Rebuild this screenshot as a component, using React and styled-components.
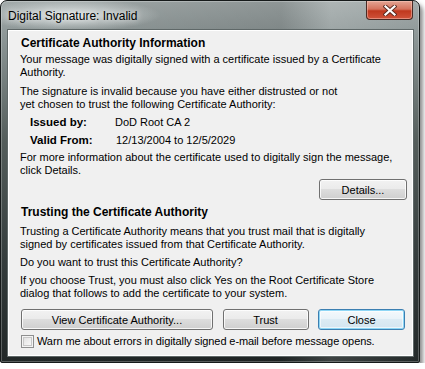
import React, { useState } from 'react';
import styled, { createGlobalStyle } from 'styled-components';

const GlobalStyle = createGlobalStyle`
  html, body {
    margin: 0;
    padding: 0;
    background: #ffffff;
  }
  body {
    font-family: "Liberation Sans", Arial, sans-serif;
  }
`;

const Window = styled.div`
  width: 418px;
  height: 361px;
  border: 1px solid #161a1a;
  border-radius: 7px 7px 2px 2px;
  background:
    radial-gradient(ellipse 90px 16px at 70px 14px, rgba(235, 240, 240, 0.85), rgba(235, 240, 240, 0) 100%),
    linear-gradient(to right, rgba(255,255,255,0) 0, rgba(0,0,0,0.12) 280px, rgba(255,255,255,0.12) 330px, rgba(255,255,255,0) 420px),
    linear-gradient(to bottom, #a3abab 0, #8a9494 40px, #545d5b 140px, #343c3c 260px, #222828 100%);
  box-shadow: 3px 4px 4px rgba(0, 0, 0, 0.45), inset 0 0 0 1px rgba(255, 255, 255, 0.25);
  display: flex;
  flex-direction: column;
`;

const TitleBar = styled.div`
  height: 28px;
  display: flex;
  align-items: flex-start;
  padding: 0 6px 0 7px;
`;

const TitleText = styled.div`
  margin-top: 8px;
  font-size: 12px;
  line-height: 14px;
  color: #000;
  text-shadow: 0 0 6px rgba(255, 255, 255, 0.9);
`;

const CloseButton = styled.div`
  margin-left: auto;
  width: 45px;
  height: 18px;
  border: 1px solid #4a2a24;
  border-top: none;
  border-radius: 0 0 4px 4px;
  background: linear-gradient(to bottom, #e4a594 0, #d5735d 45%, #c0381e 55%, #d0533a 100%);
  box-shadow: inset 0 0 0 1px rgba(255, 210, 200, 0.45);
  display: flex;
  align-items: center;
  justify-content: center;
`;

const Panel = styled.div`
  flex: 1;
  margin: 0 5px 5px 6px;
  border: 1px solid #5f6868;
  box-shadow: inset 0 0 0 1px #ffffff;
  background: #f0f0f0;
  padding: 7px 6px 0 12px;
  display: flex;
  flex-direction: column;
  font-size: 11px;
  line-height: 13px;
  color: #000;
`;

const Heading = styled.div`
  font-weight: bold;
  font-size: 12px;
  padding-left: 1px;
  margin-top: ${p => p.$mt || 0}px;
`;

const Para = styled.div`
  white-space: nowrap;
  margin-top: ${p => p.$mt || 0}px;
`;

const InfoGrid = styled.div`
  margin-top: 5px;
  padding-left: 10px;
  display: grid;
  grid-template-columns: 85px auto;
  row-gap: 5px;
`;

const InfoLabel = styled.div`
  font-weight: bold;
  font-size: 11.5px;
`;

const InfoValue = styled.div`
  padding-left: ${p => p.$pl || 0}px;
`;

const DetailsRow = styled.div`
  margin-top: 2px;
  display: flex;
  justify-content: flex-end;
`;

const Button = styled.button`
  width: ${p => p.$w}px;
  height: 21px;
  padding: 0;
  font-family: inherit;
  font-size: 11px;
  color: #000;
  border: 1px solid ${p => (p.$default ? '#3c7fb1' : '#707070')};
  border-radius: 3px;
  background: ${p => (p.$default
    ? 'linear-gradient(to bottom, #f4f9fc 0, #eaf3f9 45%, #dcebf4 50%, #d3e5f0 100%)'
    : 'linear-gradient(to bottom, #f2f2f2 0, #ebebeb 45%, #dddddd 50%, #cfcfcf 100%)')};
  box-shadow: ${p => (p.$default
    ? 'inset 0 0 0 1px #8ed6f5, inset 0 0 0 2px rgba(255,255,255,0.6)'
    : 'inset 0 0 0 1px rgba(255,255,255,0.8)')};
`;

const ButtonRow = styled.div`
  margin-top: 9px;
  margin-left: 1px;
  width: 384px;
  display: flex;
  justify-content: space-between;
`;

const CheckRow = styled.label`
  margin-top: 5px;
  margin-left: 1px;
  display: flex;
  align-items: center;
  gap: 3px;
  white-space: nowrap;
  letter-spacing: -0.1px;
`;

const CheckBox = styled.span`
  width: 11px;
  height: 11px;
  border: 1px solid #8e8f8f;
  background: linear-gradient(135deg, #dcdcdc 0, #f4f4f4 70%, #ffffff 100%);
  box-shadow: inset 0 0 0 1px #f4f4f4, inset 0 0 0 2px #c8c8c8;
  display: flex;
  align-items: center;
  justify-content: center;
`;

const CloseGlyph = () => (
  <svg width="14" height="11" viewBox="0 0 14 11">
    <path d="M2.5 1.5 L11.5 9.5 M11.5 1.5 L2.5 9.5" stroke="#5a2a20" strokeWidth="4" strokeLinecap="square" />
    <path d="M2.5 1.5 L11.5 9.5 M11.5 1.5 L2.5 9.5" stroke="#ffffff" strokeWidth="2.2" strokeLinecap="square" />
  </svg>
);

const App = () => {
  const [warn, setWarn] = useState(false);

  return (
    <>
      <GlobalStyle />
      <Window>
        <TitleBar>
          <TitleText>Digital Signature: Invalid</TitleText>
          <CloseButton><CloseGlyph /></CloseButton>
        </TitleBar>
        <Panel>
          <Heading>Certificate Authority Information</Heading>
          <Para $mt={3}>
            Your message was digitally signed with a certificate issued by a Certificate<br />
            Authority.
          </Para>
          <Para $mt={6}>
            The signature is invalid because you have either distrusted or not<br />
            yet chosen to trust the following Certificate Authority:
          </Para>
          <InfoGrid>
            <InfoLabel>Issued by:</InfoLabel>
            <InfoValue>DoD Root CA 2</InfoValue>
            <InfoLabel>Valid From:</InfoLabel>
            <InfoValue $pl={1}>12/13/2004 to 12/5/2029</InfoValue>
          </InfoGrid>
          <Para $mt={4}>
            For more information about the certificate used to digitally sign the message,<br />
            click Details.
          </Para>
          <DetailsRow>
            <Button $w={88}>Details...</Button>
          </DetailsRow>
          <Heading $mt={6}>Trusting the Certificate Authority</Heading>
          <Para $mt={6}>
            Trusting a Certificate Authority means that you trust mail that is digitally<br />
            signed by certificates issued from that Certificate Authority.
          </Para>
          <Para $mt={5}>Do you want to trust this Certificate Authority?</Para>
          <Para $mt={5}>
            If you choose Trust, you must also click Yes on the Root Certificate Store<br />
            dialog that follows to add the certificate to your system.
          </Para>
          <ButtonRow>
            <Button $w={192}>View Certificate Authority...</Button>
            <Button $w={86}>Trust</Button>
            <Button $w={87} $default>Close</Button>
          </ButtonRow>
          <CheckRow onClick={() => setWarn(!warn)}>
            <CheckBox>{warn ? '✓' : null}</CheckBox>
            Warn me about errors in digitally signed e-mail before message opens.
          </CheckRow>
        </Panel>
      </Window>
    </>
  );
};

export default App;
